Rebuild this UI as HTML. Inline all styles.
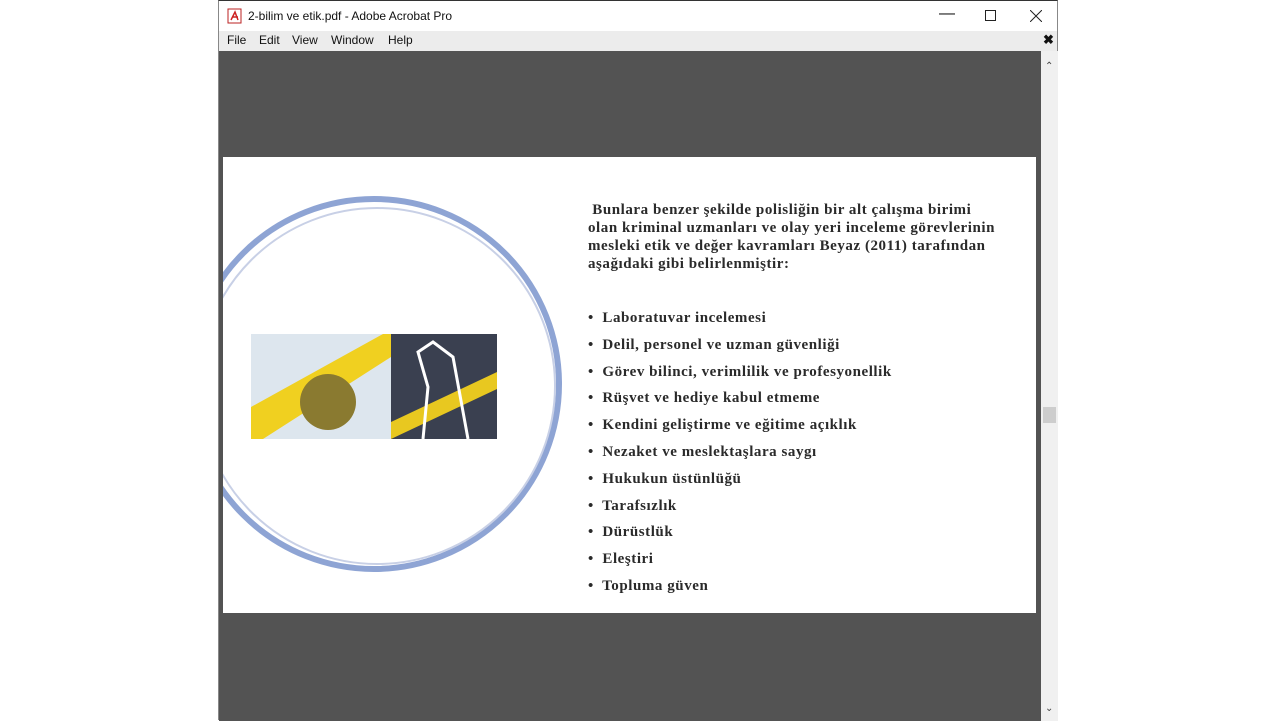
<!DOCTYPE html>
<html><head><meta charset="utf-8"><style>
*{margin:0;padding:0;box-sizing:border-box}
body{width:1280px;height:720px;background:#fff;position:relative;overflow:hidden;font-family:"Liberation Sans",sans-serif}
.win{position:absolute;left:218px;top:0;width:840px;height:720px;border-left:1px solid #888;border-right:1px solid #888;border-top:1px solid #333}
.title{position:absolute;left:0;top:0;width:100%;height:30px;background:#fff;font-size:12px;color:#111}
.menu{position:absolute;left:0;top:30px;width:100%;height:20px;background:#ececec;font-size:12px;color:#111}
.menu span{position:absolute;top:2px}
.content{position:absolute;left:0;top:50px;width:822px;height:670px;background:#535353}
.sb{position:absolute;left:822px;top:50px;width:17px;height:670px;background:#f0f0f0}
.page{position:absolute;left:4px;top:106px;width:813px;height:456px;background:#fff;overflow:hidden}
.txt{position:absolute;font-family:"Liberation Serif",serif;font-weight:bold;color:#2a2a2a;font-size:15px;letter-spacing:0.55px}
</style></head><body>
<div class="win">
 <div class="title">
  <svg style="position:absolute;left:8px;top:7px" width="16" height="16"><rect x="1" y="1" width="13" height="14" fill="#fff" stroke="#b22"/><path d="M4 12 L8 4 L11 12 M5 9 H11" stroke="#c22" fill="none" stroke-width="1.5"/></svg>
  <span style="position:absolute;left:29px;top:8px">2-bilim ve etik.pdf - Adobe Acrobat Pro</span>
  <span style="position:absolute;left:720px;top:4px;font-size:16px">&#8212;</span>
  <div style="position:absolute;left:766px;top:9px;width:11px;height:11px;border:1px solid #222"></div>
  <svg style="position:absolute;left:811px;top:9px" width="12" height="12"><path d="M0 0L12 12M12 0L0 12" stroke="#222"/></svg>
 </div>
 <div class="menu">
  <span style="left:8px">File</span><span style="left:40px">Edit</span><span style="left:73px">View</span><span style="left:112px">Window</span><span style="left:169px">Help</span>
  <span style="left:824px;font-weight:bold;font-size:13px;top:1px">&#10006;</span>
 </div>
 <div class="content">
  <div class="page">
   <svg style="position:absolute;left:0;top:0" width="400" height="456">
    <circle cx="151" cy="227" r="185" fill="none" stroke="#8ea4d4" stroke-width="6"/>
    <circle cx="154" cy="229" r="178" fill="#fff" stroke="#c8d0e6" stroke-width="2"/>
    <rect x="28" y="177" width="140" height="105" fill="#dde6ee"/>
    <polygon points="28,250 160,177 168,177 168,200 40,282 28,282" fill="#f0d020"/>
    <circle cx="105" cy="245" r="28" fill="#8a7a30"/>
    <rect x="168" y="177" width="106" height="105" fill="#3a4050"/>
    <polygon points="168,265 274,215 274,232 168,282" fill="#e8c820"/>
    <path d="M200 282 L205 230 L195 195 L210 185 L230 200 L245 282" stroke="#fff" stroke-width="3" fill="none"/>
   </svg>
   <div class="txt" style="left:365px;top:44px;line-height:18px;width:450px">&nbsp;Bunlara benzer şekilde polisliğin bir alt çalışma birimi<br>olan kriminal uzmanları ve olay yeri inceleme görevlerinin<br>mesleki etik ve değer kavramları Beyaz (2011) tarafından<br>aşağıdaki gibi belirlenmiştir:</div>
   <div class="txt" style="left:365px;top:148px;line-height:26.8px">
    •&nbsp; Laboratuvar incelemesi<br>•&nbsp; Delil, personel ve uzman güvenliği<br>•&nbsp; Görev bilinci, verimlilik ve profesyonellik<br>•&nbsp; Rüşvet ve hediye kabul etmeme<br>•&nbsp; Kendini geliştirme ve eğitime açıklık<br>•&nbsp; Nezaket ve meslektaşlara saygı<br>•&nbsp; Hukukun üstünlüğü<br>•&nbsp; Tarafsızlık<br>•&nbsp; Dürüstlük<br>•&nbsp; Eleştiri<br>•&nbsp; Topluma güven
   </div>
  </div>
 </div>
 <div class="sb">
  <span style="position:absolute;left:4px;top:10px;font-size:10px;color:#444">&#8963;</span>
  <div style="position:absolute;left:2px;top:356px;width:13px;height:16px;background:#cdcdcd"></div>
  <span style="position:absolute;left:4px;top:652px;font-size:10px;color:#444">&#8964;</span>
 </div>
</div>
</body></html>
